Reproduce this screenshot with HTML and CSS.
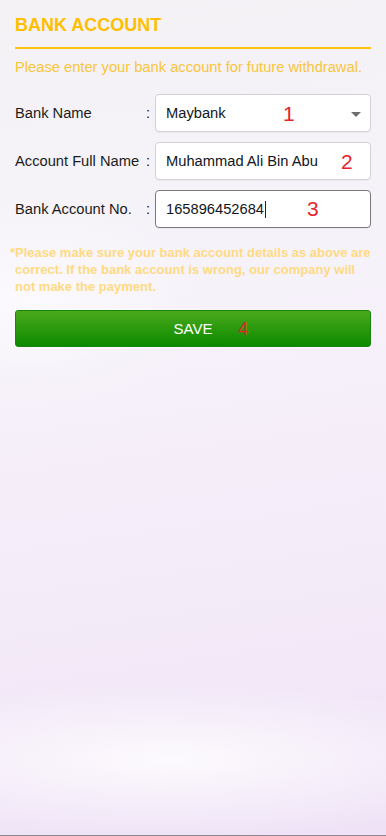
FILE: index.html
```html
<!DOCTYPE html>
<html>
<head>
<meta charset="utf-8">
<link rel="stylesheet" href="styles.css">
</head>
<body>
<div class="page">
  <div class="content">
    <h1 class="title">BANK ACCOUNT</h1>
    <p class="subtitle">Please enter your bank account for future withdrawal.</p>
    <div class="form">
      <div class="row">
        <span class="label">Bank Name</span><span class="colon">:</span>
        <div class="field select">
          <span class="value">Maybank</span>
          <span class="mark m1">1</span>
          <span class="arrow"></span>
        </div>
      </div>
      <div class="row">
        <span class="label">Account Full Name</span><span class="colon">:</span>
        <div class="field">
          <span class="value">Muhammad Ali Bin Abu</span>
          <span class="mark m2">2</span>
        </div>
      </div>
      <div class="row">
        <span class="label">Bank Account No.</span><span class="colon">:</span>
        <div class="field focused">
          <span class="value">165896452684<span class="caret"></span></span>
          <span class="mark m3">3</span>
        </div>
      </div>
    </div>
    <p class="note">*Please make sure your bank account details as above are<br>correct. If the bank account is wrong, our company will<br>not make the payment.</p>
    <button class="save">SAVE<span class="mark m4">4</span></button>
  </div>
</div>
</body>
</html>
```
FILE: styles.css
```css
html, body {
  margin: 0;
  padding: 0;
}
body {
  font-family: "Liberation Sans", Arial, sans-serif;
  background: #f6f1fa;
}
.page {
  box-sizing: border-box;
  height: 836px;
  border-bottom: 1px solid #8c8a8e;
  overflow: hidden;
  background:
    radial-gradient(ellipse 520px 110px at 170px 760px, rgba(255,255,255,0.8), rgba(255,255,255,0) 70%),
    radial-gradient(ellipse 260px 160px at 30px 300px, rgba(255,255,255,0.6), rgba(255,255,255,0) 70%),
    linear-gradient(172deg, #f4f2f5 0%, #f6f2fa 35%, #f4ebf8 70%, #efe2f7 100%);
}
.content {
  padding: 14px 15px 0 15px;
}
.title {
  margin: 0;
  font-size: 18px;
  line-height: 22px;
  font-weight: bold;
  color: #ffbf00;
  padding-bottom: 11px;
  border-bottom: 2px solid #ffc20e;
}
.subtitle {
  margin: 8px 0 0 0;
  font-size: 14.7px;
  line-height: 20px;
  color: #f9c53c;
}
.form {
  margin-top: 17px;
  display: flex;
  flex-direction: column;
  gap: 10px;
}
.row {
  display: flex;
  align-items: center;
  height: 38px;
}
.label {
  width: 131px;
  font-size: 14.7px;
  color: #1c1c1c;
  white-space: nowrap;
}
.colon {
  width: 9px;
  font-size: 14.7px;
  color: #1c1c1c;
}
.field {
  position: relative;
  flex: 1;
  box-sizing: border-box;
  height: 38px;
  background: #fff;
  border: 1px solid #d2d0d4;
  border-radius: 4px;
  display: flex;
  align-items: center;
  padding-left: 10px;
  box-shadow: 0 1px 1px rgba(0,0,0,0.04);
}
.field.focused {
  border-color: #7a797c;
}
.value {
  font-size: 14.7px;
  color: #111622;
  display: inline-flex;
  align-items: center;
}
.caret {
  display: inline-block;
  width: 1px;
  height: 17px;
  background: #222;
  margin-left: 1px;
}
.arrow {
  position: absolute;
  right: 9px;
  top: 17px;
  width: 0;
  height: 0;
  border-left: 5px solid transparent;
  border-right: 5px solid transparent;
  border-top: 5px solid #6e6d70;
}
.mark {
  position: absolute;
  font-size: 21px;
  line-height: 21px;
  color: #e8232b;
  font-family: "Liberation Sans", Arial, sans-serif;
}
.m1 { left: 127px; top: 8px; }
.m2 { left: 185px; top: 8px; }
.m3 { left: 151px; top: 7px; }
.note {
  margin: 16px 0 0 0;
  font-size: 13px;
  line-height: 17px;
  font-weight: bold;
  color: #ffda82;
  text-indent: -5px;
  white-space: nowrap;
}
.save {
  position: relative;
  display: block;
  width: 100%;
  height: 37px;
  margin-top: 15px;
  border: 1px solid #17850a;
  border-radius: 3px;
  background: linear-gradient(to bottom, #4ba91b, #0c8a00);
  color: #fff;
  font-family: "Liberation Sans", Arial, sans-serif;
  font-size: 15px;
  padding: 0;
  box-shadow: 0 0 0 1px rgba(255,255,255,0.5);
}
.m4 {
  left: 222px;
  top: 7px;
  font-size: 19px;
}
```
